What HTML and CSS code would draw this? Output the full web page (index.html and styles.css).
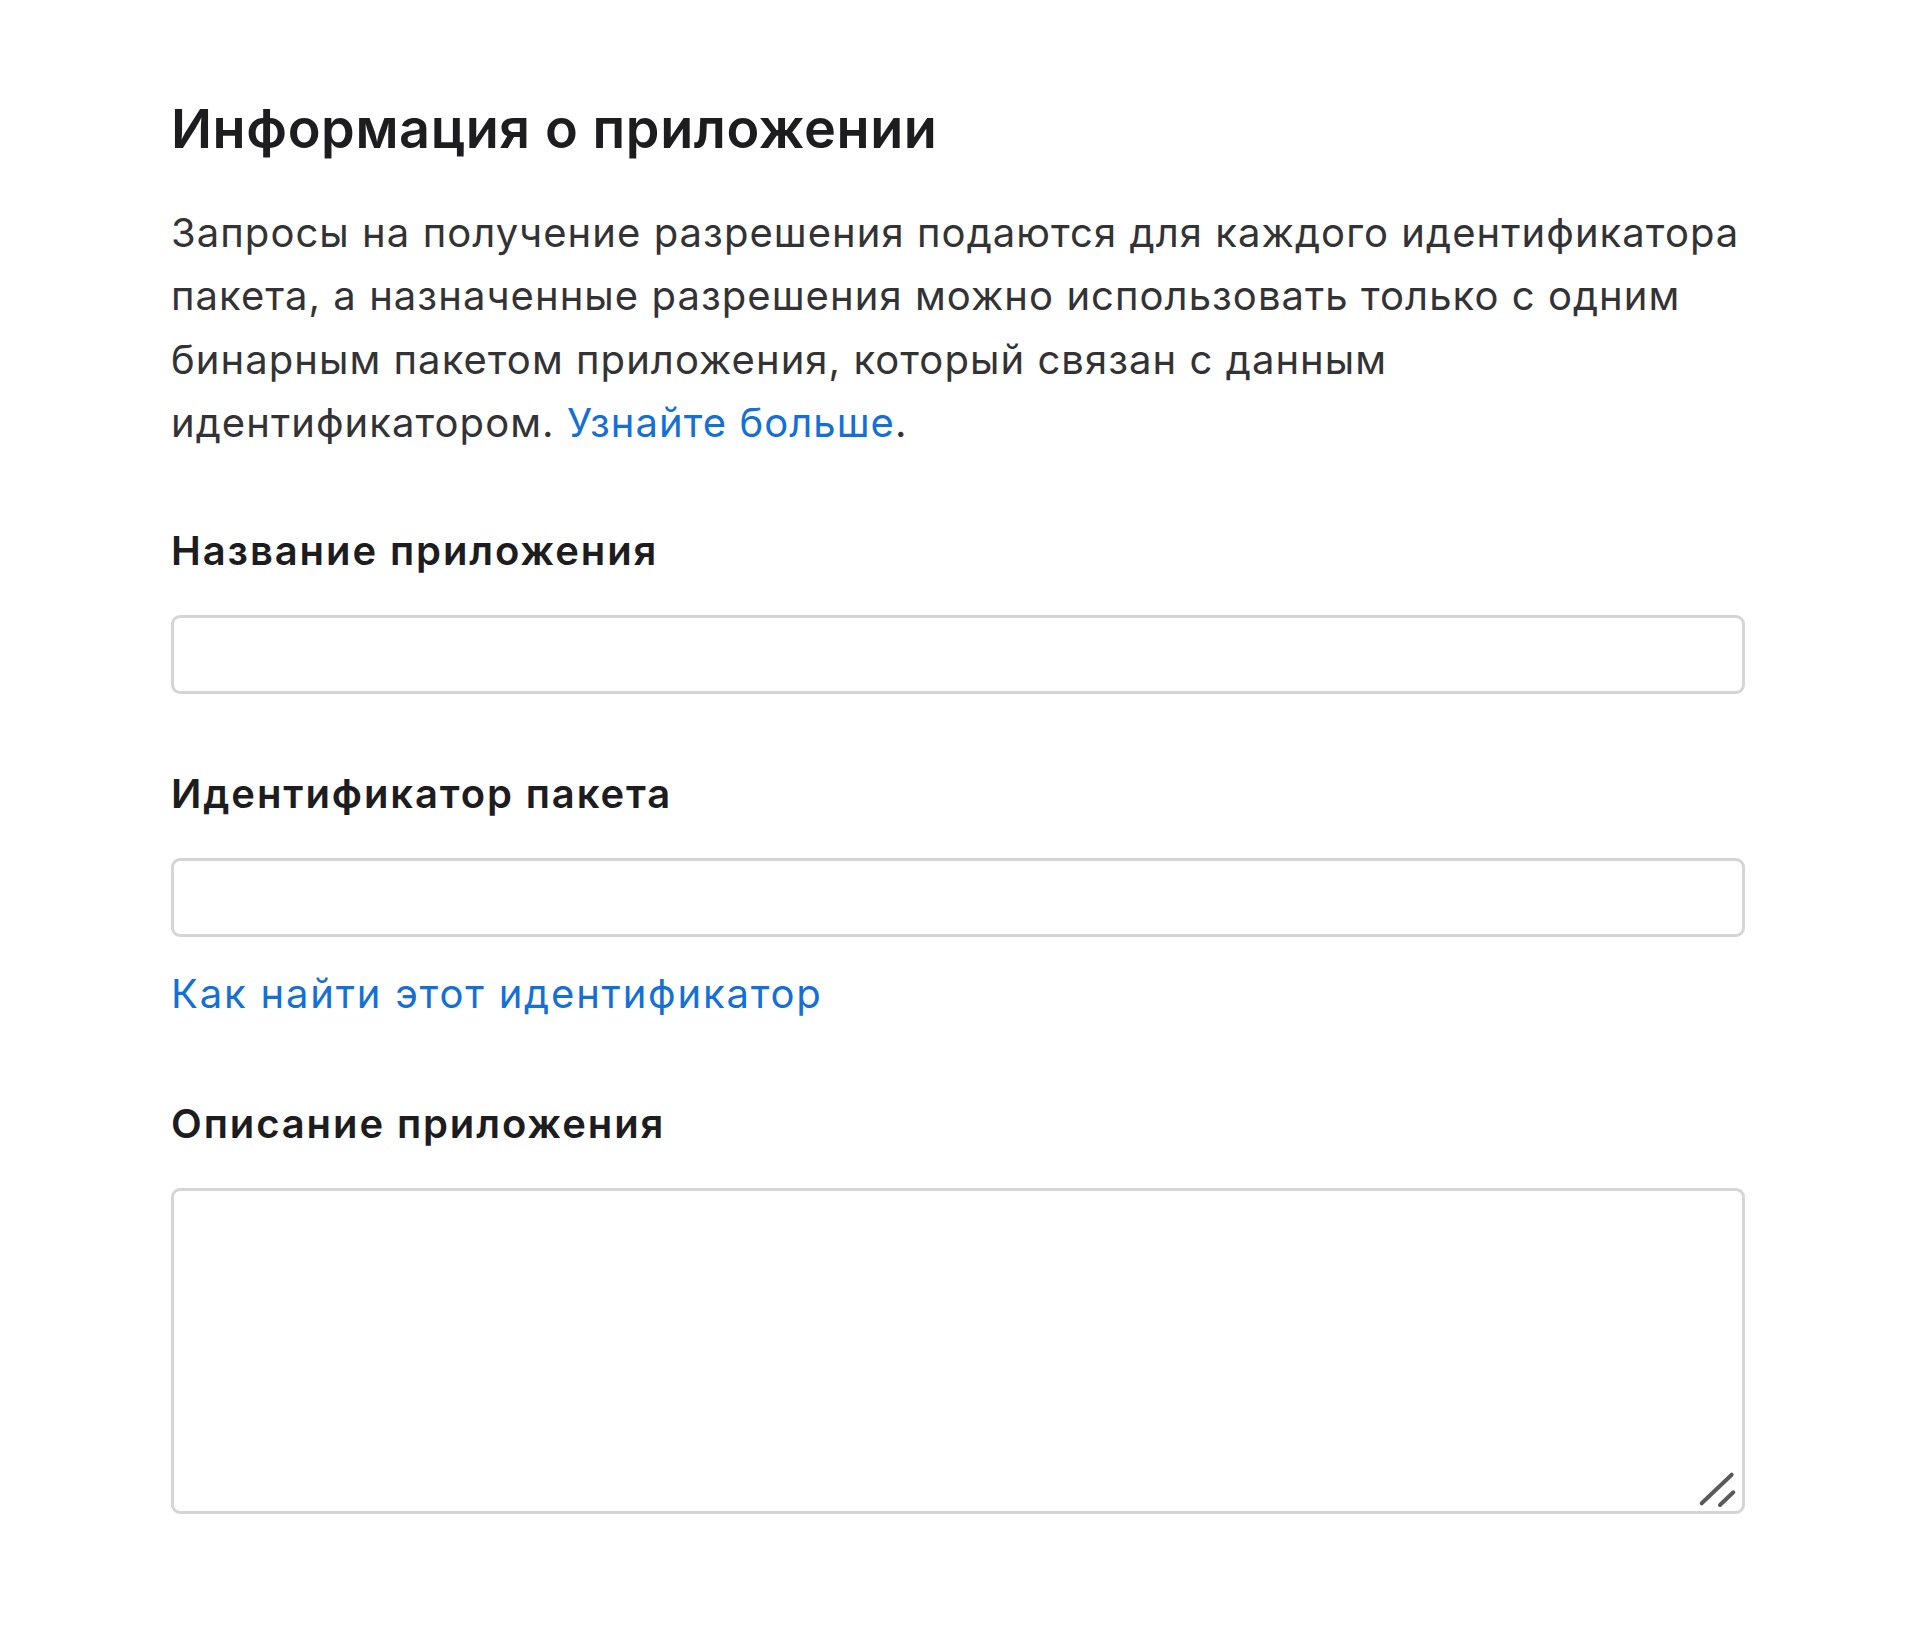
FILE: index.html
```html
<!DOCTYPE html>
<html lang="ru">
<head>
<meta charset="utf-8">
<title>Информация о приложении</title>
<link rel="stylesheet" href="styles.css">
</head>
<body>
<main class="page">
  <section class="app-info">
    <h2 class="title">Информация о приложении</h2>
    <p class="intro">Запросы на получение разрешения подаются для каждого идентификатора пакета, а назначенные разрешения можно использовать только с одним бинарным пакетом приложения, который связан с данным идентификатором. <a class="link" href="#">Узнайте больше</a>.</p>

    <div class="field field-first">
      <label class="label" for="app-name">Название приложения</label>
      <input class="input" id="app-name" type="text">
    </div>

    <div class="field">
      <label class="label" for="bundle-id">Идентификатор пакета</label>
      <input class="input" id="bundle-id" type="text">
      <a class="link help" href="#">Как найти этот идентификатор</a>
    </div>

    <div class="field field-last">
      <label class="label" for="app-desc">Описание приложения</label>
      <div class="textarea-wrap">
        <textarea class="textarea" id="app-desc"></textarea>
        <svg class="grip" width="44" height="44" viewBox="0 0 44 44" aria-hidden="true">
          <line x1="4.7" y1="37.3" x2="34.7" y2="8.7" stroke="#5a5a5e" stroke-width="4" stroke-linecap="round"/>
          <line x1="23" y1="39" x2="36.3" y2="26.3" stroke="#5a5a5e" stroke-width="4" stroke-linecap="round"/>
        </svg>
      </div>
    </div>
  </section>
</main>
</body>
</html>
```

FILE: styles.css
```css
* {
  box-sizing: border-box;
}

html, body {
  margin: 0;
  padding: 0;
  background: #ffffff;
}

body {
  font-family: Inter, "Noto Sans", "DejaVu Sans", sans-serif;
  color: #333336;
}

.page {
  padding: 97px 0 0 171px;
}

.app-info {
  width: 1574px;
  display: flex;
  flex-direction: column;
  align-items: flex-start;
}

.title {
  margin: 0;
  font-size: 54px;
  line-height: 64.8px;
  font-weight: 600;
  letter-spacing: 0.6px;
  color: #1d1d1f;
}

.intro {
  margin: 39px 0 0;
  width: 1600px;
  font-size: 40px;
  line-height: 63.5px;
  font-weight: 400;
  letter-spacing: 1.05px;
  color: #333336;
}

.link {
  color: #1470d6;
  text-decoration: none;
}

.field {
  width: 100%;
  display: flex;
  flex-direction: column;
  align-items: flex-start;
  margin-top: 76px;
}

.field-first {
  margin-top: 72px;
}

.field-last {
  margin-top: 82px;
}

.label {
  display: block;
  margin-bottom: 40px;
  font-size: 40px;
  line-height: 48px;
  font-weight: 600;
  letter-spacing: 1.9px;
  color: #1d1d1f;
}

.input {
  display: block;
  width: 100%;
  height: 79px;
  margin: 0;
  padding: 0 20px;
  border: 3px solid #d4d4d9;
  border-radius: 9px;
  background: #ffffff;
  font: inherit;
  font-size: 40px;
  outline: none;
}

.help {
  margin-top: 33px;
  font-size: 40px;
  line-height: 48px;
  letter-spacing: 1.8px;
}

.textarea-wrap {
  position: relative;
  width: 100%;
}

.textarea {
  display: block;
  width: 100%;
  height: 326px;
  margin: 0;
  padding: 20px;
  border: 3px solid #d4d4d9;
  border-radius: 9px;
  background: #ffffff;
  font: inherit;
  font-size: 40px;
  resize: none;
  outline: none;
}

.grip {
  position: absolute;
  right: 4px;
  bottom: 4px;
}
```
